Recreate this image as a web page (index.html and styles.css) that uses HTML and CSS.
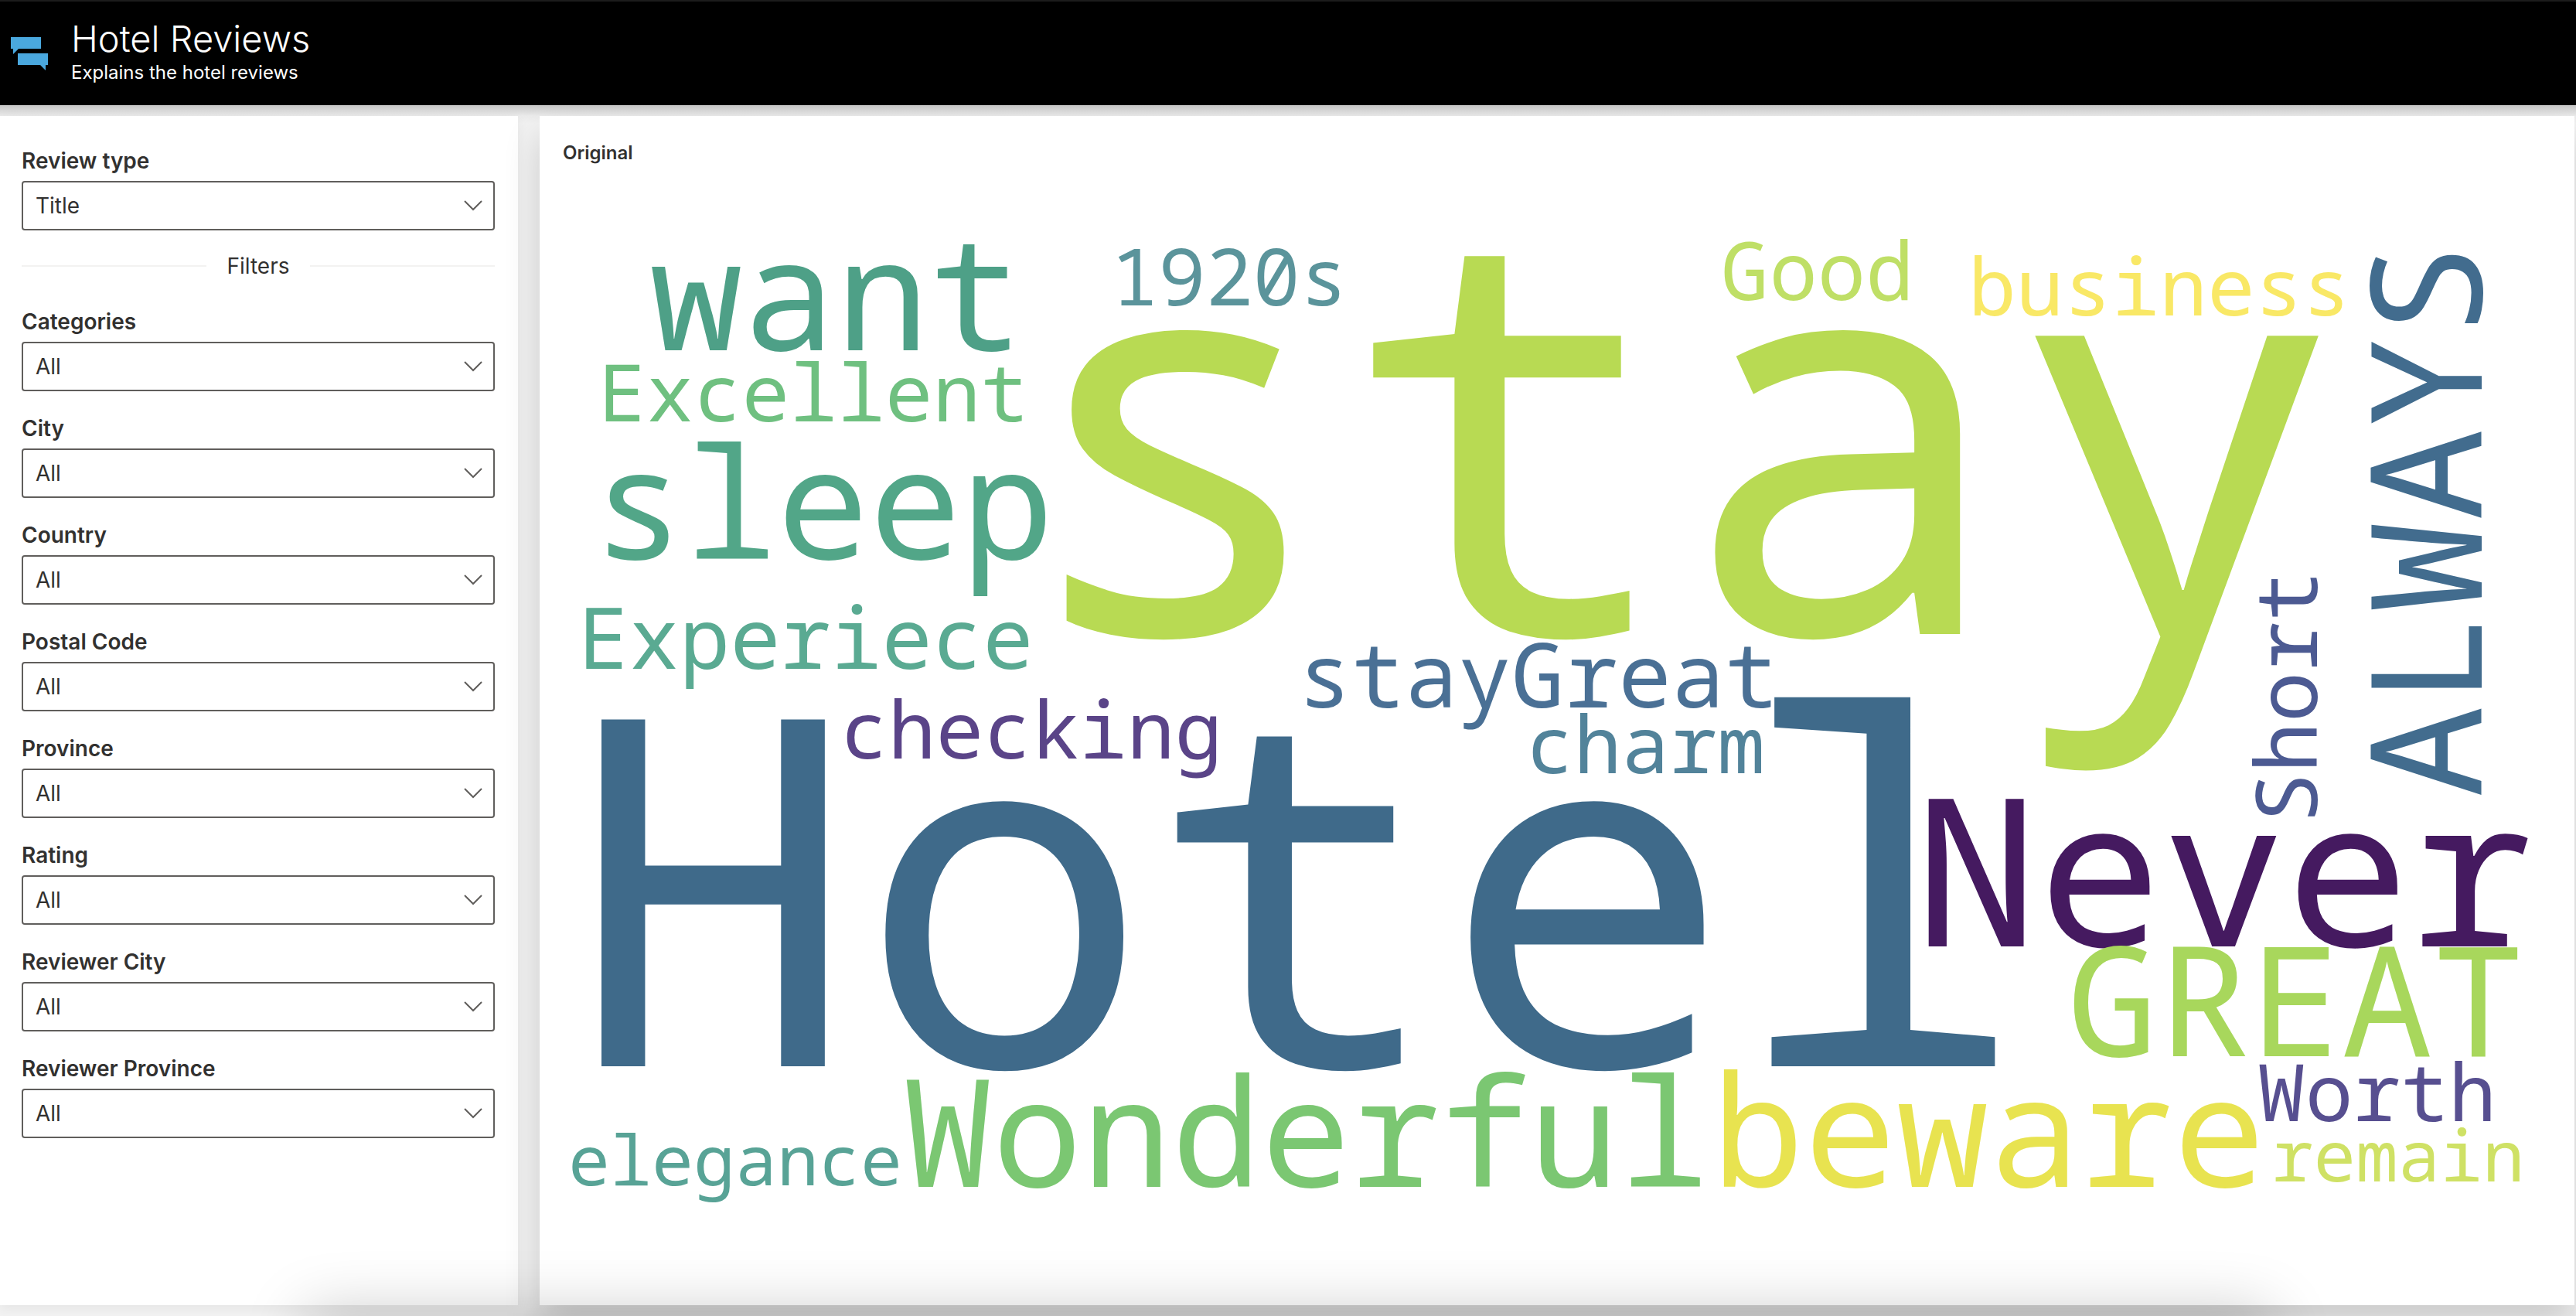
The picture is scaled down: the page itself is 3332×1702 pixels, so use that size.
FILE: index.html
```html
<!DOCTYPE html>
<html lang="en">
<head>
<meta charset="utf-8">
<meta name="viewport" content="width=device-width, initial-scale=1">
<title>Hotel Reviews</title>
<link rel="stylesheet" href="styles.css">
</head>
<body>
<header class="header">
  <svg class="logo" viewBox="0 0 48 44" aria-hidden="true"><path d="M0 0H39V15H10L3 22V15H0ZM9 21H48V36H45V43L38 36H9Z"/></svg>
  <div class="titles">
    <h1 class="title">Hotel Reviews</h1>
    <p class="subtitle">Explains the hotel reviews</p>
  </div>
</header>
<main class="content">
  <form class="sidebar">
    <div class="field"><label for="type">Review type</label><div class="picker"><select id="type"><option>Title</option></select><svg class="chevron" viewBox="0 0 24 14" aria-hidden="true"><path d="M1 1L12 12L23 1"/></svg></div></div>
    <div class="separator">Filters</div>
    <div class="field"><label for="categories">Categories</label><div class="picker"><select id="categories"><option>All</option></select><svg class="chevron" viewBox="0 0 24 14" aria-hidden="true"><path d="M1 1L12 12L23 1"/></svg></div></div>
    <div class="field"><label for="city">City</label><div class="picker"><select id="city"><option>All</option></select><svg class="chevron" viewBox="0 0 24 14" aria-hidden="true"><path d="M1 1L12 12L23 1"/></svg></div></div>
    <div class="field"><label for="country">Country</label><div class="picker"><select id="country"><option>All</option></select><svg class="chevron" viewBox="0 0 24 14" aria-hidden="true"><path d="M1 1L12 12L23 1"/></svg></div></div>
    <div class="field"><label for="postal">Postal Code</label><div class="picker"><select id="postal"><option>All</option></select><svg class="chevron" viewBox="0 0 24 14" aria-hidden="true"><path d="M1 1L12 12L23 1"/></svg></div></div>
    <div class="field"><label for="province">Province</label><div class="picker"><select id="province"><option>All</option></select><svg class="chevron" viewBox="0 0 24 14" aria-hidden="true"><path d="M1 1L12 12L23 1"/></svg></div></div>
    <div class="field"><label for="rating">Rating</label><div class="picker"><select id="rating"><option>All</option></select><svg class="chevron" viewBox="0 0 24 14" aria-hidden="true"><path d="M1 1L12 12L23 1"/></svg></div></div>
    <div class="field"><label for="reviewer-city">Reviewer City</label><div class="picker"><select id="reviewer-city"><option>All</option></select><svg class="chevron" viewBox="0 0 24 14" aria-hidden="true"><path d="M1 1L12 12L23 1"/></svg></div></div>
    <div class="field"><label for="reviewer-province">Reviewer Province</label><div class="picker"><select id="reviewer-province"><option>All</option></select><svg class="chevron" viewBox="0 0 24 14" aria-hidden="true"><path d="M1 1L12 12L23 1"/></svg></div></div>
  </form>
  <section class="card">
    <h2 class="card-title">Original</h2>
    <svg class="cloud" viewBox="698 232 2632 1456" role="img" aria-label="Word cloud">
      <text x="1304" y="820" font-size="720" fill="#b8da53">stay</text>
      <text x="734" y="1379" font-size="628" fill="#3f6a8a">Hotel</text>
      <text x="2476" y="1224" font-size="267" fill="#451a60">Never</text>
      <text x="840" y="453" font-size="201" fill="#4ea087">want</text>
      <text x="766" y="723" font-size="199" fill="#52a688">sleep</text>
      <text x="1168" y="1535" font-size="193" fill="#7bc772">Wonderful</text>
      <text x="2214" y="1535" font-size="199" fill="#e8e350">beware</text>
      <text x="2674" y="1366" font-size="197" fill="#a8d75c">GREAT</text>
      <text transform="translate(3210 1032) rotate(-90)" font-size="199" fill="#426c8e">ALWAYS</text>
      <text x="1679" y="915" font-size="115" fill="#4a7095">stayGreat</text>
      <text x="748" y="865" font-size="109" fill="#5aaa92">Experiece</text>
      <text transform="translate(2997 1065) rotate(-90)" font-size="109" fill="#4c5a92">Short</text>
      <text x="774" y="545" font-size="103" fill="#6fc080">Excellent</text>
      <text x="1087" y="981" font-size="103" fill="#5a4488">checking</text>
      <text x="1437" y="395" font-size="102" fill="#5b949b">1920s</text>
      <text x="2226" y="388" font-size="104" fill="#bfdf66">Good</text>
      <text x="2546" y="408" font-size="103" fill="#f9e866">business</text>
      <text x="1974" y="1000" font-size="103" fill="#52839a">charm</text>
      <text x="2920" y="1450" font-size="103" fill="#574f90">Worth</text>
      <text x="2938" y="1528" font-size="91" fill="#cfe165">remain</text>
      <text x="735" y="1533" font-size="90" fill="#58a396">elegance</text>
    </svg>
  </section>
</main>
</body>
</html>
```
FILE: styles.css
```css
* { box-sizing: border-box; }
body {
  margin: 0;
  min-height: 100vh;
  display: flex;
  flex-direction: column;
  position: relative;
  overflow: hidden;
  background: #f2f2f2;
  color: #323130;
  font: 28px/40px Inter, "Liberation Sans", sans-serif;
}
/* soft shade rising from the lower edge of the window */
body::after {
  content: "";
  position: absolute;
  top: 100%;
  left: 12%;
  right: 12%;
  height: 120px;
  box-shadow: 0 0 80px 4px rgba(0, 0, 0, 0.22);
  pointer-events: none;
}
.header {
  position: relative;
  display: flex;
  align-items: flex-start;
  gap: 30px;
  height: 136px;
  padding: 20px 14px 0;
  background: #000;
  color: #fff;
  border-top: 2px solid #1c1c1c;
}
.logo { width: 48px; height: 44px; margin-top: 26px; fill: #4aa8de; }
.title { margin: 0; font-size: 47px; line-height: 56px; font-weight: 300; }
.subtitle { margin: 0; font-size: 24px; line-height: 32px; }
.content {
  flex: 1;
  display: flex;
  gap: 28px;
  padding: 14px 2px 14px 0;
  background: linear-gradient(#c6c6c6, #ebebeb 14px, #f2f2f2 24px);
}
.sidebar {
  width: 670px;
  flex: none;
  padding: 38px 30px 38px 28px;
  background: #fff;
  box-shadow: 0 4px 14px rgba(0, 0, 0, 0.06);
}
.field { margin-bottom: 28px; }
.field label { display: block; line-height: 40px; margin-bottom: 6px; font-weight: 600; }
.field:first-child { margin-bottom: 26px; }
.picker { position: relative; }
.picker select {
  display: block;
  width: 100%;
  height: 64px;
  padding: 0 72px 0 16px;
  appearance: none;
  background: #fff;
  border: 2px solid #605e5c;
  border-radius: 4px;
  color: #323130;
  font: inherit;
}
.chevron {
  position: absolute;
  top: 25px;
  right: 16px;
  width: 24px;
  height: 14px;
  fill: none;
  stroke: #605e5c;
  stroke-width: 2;
  pointer-events: none;
}
.separator {
  display: flex;
  align-items: center;
  gap: 26px;
  margin-bottom: 32px;
}
.separator::before, .separator::after { content: ""; flex: 1; height: 2px; background: #f3f2f1; }
.card {
  flex: 1;
  min-width: 0;
  display: flex;
  flex-direction: column;
  background: #fff;
  box-shadow: 0 26px 44px rgba(0, 0, 0, 0.16);
}
.card-title { margin: 0; padding: 32px 30px 18px; font-size: 24px; line-height: 32px; font-weight: 600; }
.cloud {
  display: block;
  width: 100%;
  flex: 1;
  min-height: 0;
  overflow: visible;
  font-family: "Noto Sans Mono", "DejaVu Sans Mono", monospace;
}
```
